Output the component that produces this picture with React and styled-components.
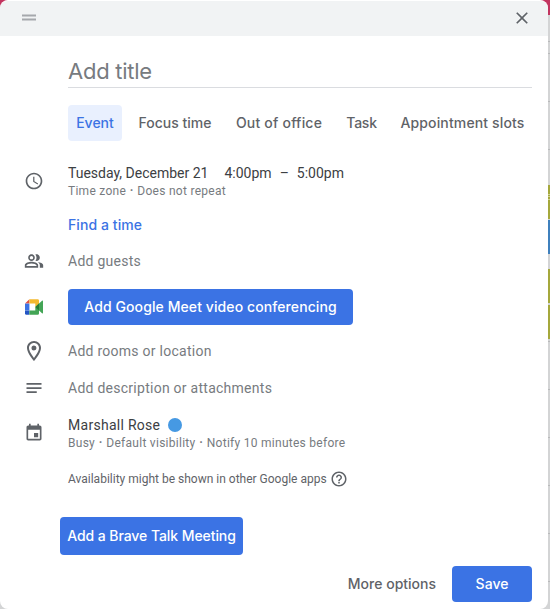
import React from 'react';
import styled, { createGlobalStyle } from 'styled-components';

const GlobalStyle = createGlobalStyle`
  * { box-sizing: border-box; }
  html, body { margin: 0; padding: 0; overflow: hidden; }
  button { border: 0; padding: 0; background: none; font: inherit; }
`;

const display = '"Inter", "Roboto", sans-serif';

const Backdrop = styled.div`
  width: 550px;
  height: 609px;
  padding: 0 2px 0 0;
  background: linear-gradient(
    #c2345f 0 15px, #d3d4d5 15px 41px, #b9babb 41px 42px, #d3d4d5 42px 53px, #b9babb 53px 54px,
    #d3d4d5 54px 101px, #b9babb 101px 102px, #d3d4d5 102px 149px, #b9babb 149px 150px,
    #d3d4d5 150px 185px, #a5a83c 185px 194px, #d0d291 194px 195px, #a5a83c 195px 196px,
    #d0d291 196px 197px, #a5a83c 197px 199px, #d0d291 199px 200px, #a5a83c 200px 219px,
    #d3d4d5 219px 220px, #3f80bd 220px 254px, #d3d4d5 254px 269px, #a5a83c 269px 303px,
    #d3d4d5 303px 305px, #a5a83c 305px 339px, #d3d4d5 339px 341px, #b9babb 341px 342px,
    #d3d4d5 342px 389px, #b9babb 389px 390px, #d3d4d5 390px 437px, #b9babb 437px 438px,
    #d3d4d5 438px 485px, #b9babb 485px 486px, #d3d4d5 486px 533px, #b9babb 533px 534px,
    #d3d4d5 534px 581px, #b9babb 581px 582px, #d3d4d5 582px
  );
`;

const Dialog = styled.section`
  display: flex;
  flex-direction: column;
  height: 609px;
  border-top: 1px solid #fff;
  border-radius: 8px;
  overflow: hidden;
  background: #fff;
  font-family: Roboto, sans-serif;
  color: #3c4043;
`;

const Header = styled.header`
  flex: none;
  display: flex;
  align-items: center;
  justify-content: space-between;
  height: 35px;
  padding: 0 16px 1px 19px;
  background: #f1f3f4;
`;

const Icon = styled.svg`
  display: block;
  flex: none;
  width: ${(p) => p.$size || 20}px;
  height: ${(p) => p.$size || 20}px;
  fill: ${(p) => p.$color || '#5f6368'};
`;

const TitleField = styled.div`
  flex: none;
  height: 52px;
  margin: 0 16px 0 68px;
  padding-top: 19px;
  border-bottom: 1px solid #dadce0;
  font: 400 22px/32px ${display};
  letter-spacing: -0.25px;
  color: #777b80;
`;

const Tabs = styled.nav`
  flex: none;
  display: flex;
  justify-content: space-between;
  width: 464px;
  margin: 17px 0 23px 68px;
`;

const Tab = styled.button`
  width: ${(p) => p.$width}px;
  height: 36px;
  border-radius: 4px;
  white-space: nowrap;
  font: 500 14px/36px ${display};
  letter-spacing: ${(p) => p.$spacing || 0}px;
  color: ${(p) => (p.$active ? '#3b73e4' : '#5f6368')};
  background: ${(p) => (p.$active ? '#e9f0fe' : 'transparent')};
`;

const Row = styled.div`
  flex: none;
  display: grid;
  grid-template-columns: 68px 1fr;
  align-items: center;
  height: ${(p) => p.$height || 36}px;
  margin-top: ${(p) => p.$gap || 0}px;
`;

const IconCell = styled.div`
  display: flex;
  justify-content: center;
  padding-bottom: ${(p) => p.$lift || 0}px;
`;

const Line = styled.div`
  display: flex;
  align-items: center;
  height: 18px;
  gap: ${(p) => p.$gap || 0}px;
  white-space: pre;
`;

const Times = styled.div`
  display: flex;
  gap: 8px;
`;

const Text = styled.span`
  font-size: 14px;
  line-height: 18px;
  letter-spacing: ${(p) => p.$spacing ?? 0.26}px;
  color: ${(p) => (p.$muted ? '#777b80' : '#3c4043')};
`;

const Detail = styled(Text)`
  font-size: 12px;
  color: ${(p) => (p.$dark ? '#5f6368' : '#777b80')};
`;

const Separator = styled.b`
  margin: 0 3.7px;
  font-weight: 700;
`;

const LinkButton = styled.button`
  justify-self: start;
  font: 500 14px/36px ${display};
  letter-spacing: 0.08px;
  color: #3b73e4;
`;

const Dot = styled.i`
  width: 14px;
  height: 14px;
  border-radius: 50%;
  background: #4699e3;
`;

const PrimaryButton = styled.button`
  flex: none;
  width: ${(p) => p.$width}px;
  height: ${(p) => p.$height || 36}px;
  border-radius: 4px;
  background: #3b73e4;
  color: #fff;
  white-space: nowrap;
  font: 500 14px/20px ${display};
  letter-spacing: ${(p) => p.$spacing || 0}px;
`;

const TalkSlot = styled.div`
  flex: none;
  margin: 29px 0 11px 60px;
  height: 38px;
`;

const Footer = styled.footer`
  flex: none;
  display: flex;
  justify-content: flex-end;
  align-items: center;
  gap: 16px;
  padding-right: 16px;
`;

const PlainButton = styled.button`
  font: 500 14px/36px ${display};
  color: #5f6368;
`;

const paths = {
  clock: 'M11.99 2C6.47 2 2 6.48 2 12s4.47 10 9.99 10C17.52 22 22 17.52 22 12S17.52 2 11.99 2zM12 20c-4.42 0-8-3.58-8-8s3.58-8 8-8 8 3.58 8 8-3.58 8-8 8zm.5-13H11v6l5.25 3.15.75-1.23-4.5-2.67V7z',
  people: 'M15 8c0-1.42-.5-2.73-1.33-3.76.42-.14.86-.24 1.33-.24 2.21 0 4 1.79 4 4s-1.79 4-4 4c-.43 0-.84-.09-1.23-.21-.03-.01-.06-.02-.1-.03A5.98 5.98 0 0 0 15 8zm1.66 5.13C18.03 14.06 19 15.32 19 17v3h4v-3c0-2.18-3.58-3.47-6.34-3.87zM9 6c-1.1 0-2 .9-2 2s.9 2 2 2 2-.9 2-2-.9-2-2-2m0 9c-2.7 0-5.8 1.29-6 2.01V18h12v-1c-.2-.71-3.3-2-6-2M9 4c2.21 0 4 1.79 4 4s-1.79 4-4 4-4-1.79-4-4 1.79-4 4-4zm0 9c2.67 0 8 1.34 8 4v3H1v-3c0-2.66 5.33-4 8-4z',
  place: 'M12 2C8.13 2 5 5.13 5 9c0 5.25 7 13 7 13s7-7.75 7-13c0-3.87-3.13-7-7-7zM7 9c0-2.76 2.24-5 5-5s5 2.24 5 5c0 2.88-2.88 7.19-5 9.88C9.92 16.21 7 11.85 7 9z M12 6.5a2.5 2.5 0 1 0 0 5 2.5 2.5 0 0 0 0-5z',
  notes: 'M3 6h18v2.1H3zM3 11h18v2.1H3zM3 16h12.3v2.1H3z',
  calendar: 'M17 12h-5v5h5v-5zM16 1v2H8V1H6v2H5c-1.11 0-2 .9-2 2v14c0 1.1.89 2 2 2h14c1.1 0 2-.9 2-2V5c0-1.1-.9-2-2-2h-1V1h-2zm3 18H5V8h14v11z',
  help: 'M11 18h2v-2h-2v2zm1-16C6.48 2 2 6.48 2 12s4.48 10 10 10 10-4.48 10-10S17.52 2 12 2zm0 18c-4.41 0-8-3.59-8-8s3.59-8 8-8 8 3.59 8 8-3.59 8-8 8zm0-14c-2.21 0-4 1.79-4 4h2c0-1.1.9-2 2-2s2 .9 2 2c0 2-3 1.75-3 5h2c0-2.25 3-2.5 3-5 0-2.21-1.79-4-4-4z',
  close: 'M19 6.41L17.59 5 12 10.59 6.41 5 5 6.41 10.59 12 5 17.59 6.41 19 12 13.41 17.59 19 19 17.59 13.41 12z',
  drag: 'M3.6 7.8h16.8v2.4H3.6zM3.6 12.6h16.8V15H3.6z',
};

function Glyph({ name, size, color }) {
  return (
    <Icon viewBox="0 0 24 24" $size={size} $color={color} aria-hidden="true">
      <path d={paths[name]} />
    </Icon>
  );
}

function MeetLogo() {
  return (
    <Icon viewBox="0 0 20 20" aria-hidden="true">
      <path fill="#e25142" d="M1 6.6 5.4 2.2v4.4z" />
      <path fill="#3b73e4" d="M1 6.6h4.4v6.8H1z" />
      <path fill="#2456c4" d="M1 13.4h4.4v4.4h-3A1.4 1.4 0 0 1 1 16.4z" />
      <path fill="#f3b92f" d="M5.4 2.2h8.2A1.4 1.4 0 0 1 15 3.6v4L11.3 10V6.6H5.4z" />
      <path fill="#43a556" d="M5.4 13.4h5.9V10L15 12v4.4a1.4 1.4 0 0 1-1.4 1.4H5.4z" />
      <path fill="#43a556" d="M11.3 10 18 3.8c.5-.4 1-.1 1 .4v11.6c0 .5-.5.8-1 .4z" />
      <path fill="#287a38" d="M11.3 10 15 6.6v6.8z" />
    </Icon>
  );
}

function DetailRow({ icon, height, gap, lift, children }) {
  return (
    <Row $height={height} $gap={gap}>
      <IconCell $lift={lift}>{icon}</IconCell>
      {children}
    </Row>
  );
}

function DetailList({ items }) {
  return (
    <Line>
      <Detail $spacing={0.27}>
        {items.map((item, i) => (
          <React.Fragment key={item}>
            {i > 0 && <Separator>·</Separator>}
            {item}
          </React.Fragment>
        ))}
      </Detail>
    </Line>
  );
}

export default function App() {
  return (
    <Backdrop>
      <GlobalStyle />
      <Dialog>
        <Header>
          <Glyph name="drag" color="#a5a8ac" />
          <Glyph name="close" />
        </Header>

        <TitleField>Add title</TitleField>

        <Tabs>
          <Tab $width={54} $active>Event</Tab>
          <Tab $width={88}>Focus time</Tab>
          <Tab $width={102} $spacing={0.2}>Out of office</Tab>
          <Tab $width={45} $spacing={-0.25}>Task</Tab>
          <Tab $width={139} $spacing={0.14}>Appointment slots</Tab>
        </Tabs>

        <DetailRow lift={2} icon={<Glyph name="clock" />}>
          <div>
            <Line $gap={16}>
              <Text $spacing={0}>Tuesday, December 21</Text>
              <Times>
                <Text $spacing={0}>4:00pm</Text>
                <Text $spacing={0}>–</Text>
                <Text $spacing={0}>5:00pm</Text>
              </Times>
            </Line>
            <DetailList items={['Time zone', 'Does not repeat']} />
          </div>
        </DetailRow>
        <DetailRow gap={7}><LinkButton>Find a time</LinkButton></DetailRow>
        <DetailRow icon={<Glyph name="people" />}>
          <Text $muted>Add guests</Text>
        </DetailRow>
        <DetailRow gap={10} icon={<MeetLogo />}>
          <PrimaryButton $width={285} $spacing={0.09}>Add Google Meet video conferencing</PrimaryButton>
        </DetailRow>
        <DetailRow gap={8} icon={<Glyph name="place" size={24} />}>
          <Text $muted>Add rooms or location</Text>
        </DetailRow>
        <DetailRow gap={1} icon={<Glyph name="notes" />}>
          <Text $muted>Add description or attachments</Text>
        </DetailRow>
        <DetailRow gap={10} lift={2} icon={<Glyph name="calendar" />}>
          <div>
            <Line $gap={8}><Text $spacing={0.28}>Marshall Rose</Text><Dot /></Line>
            <DetailList items={['Busy', 'Default visibility', 'Notify 10 minutes before']} />
          </div>
        </DetailRow>
        <DetailRow gap={18} height={18}>
          <Line $gap={3}>
            <Detail $dark $spacing={0}>Availability might be shown in other Google apps</Detail>
            <Glyph name="help" size={18} />
          </Line>
        </DetailRow>

        <TalkSlot>
          <PrimaryButton $width={183} $height={38} $spacing={-0.07}>Add a Brave Talk Meeting</PrimaryButton>
        </TalkSlot>

        <Footer>
          <PlainButton>More options</PlainButton>
          <PrimaryButton $width={80}>Save</PrimaryButton>
        </Footer>
      </Dialog>
    </Backdrop>
  );
}
